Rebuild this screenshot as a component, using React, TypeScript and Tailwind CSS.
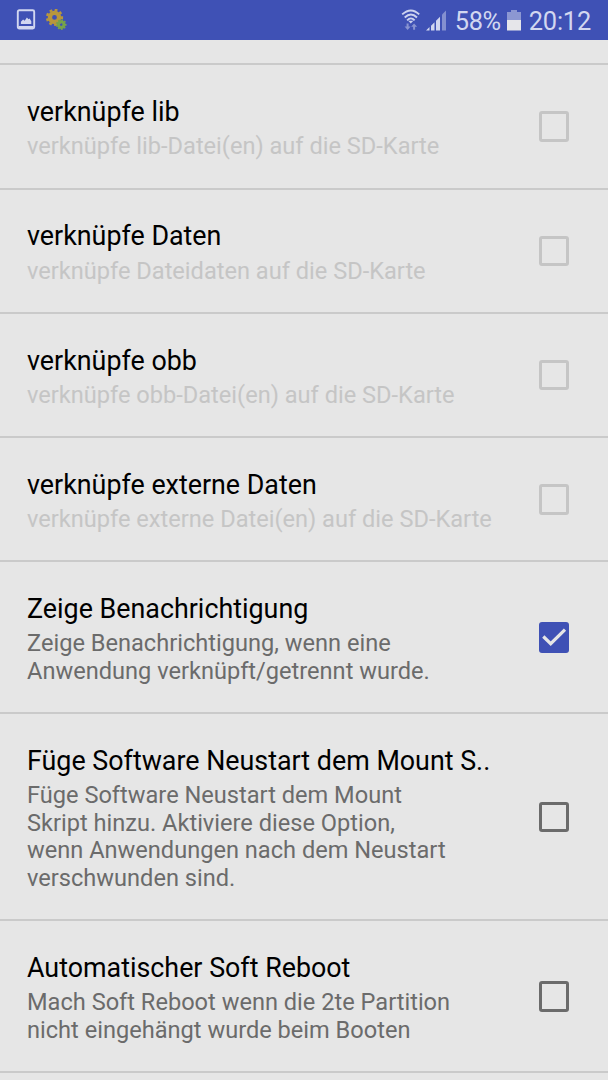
import { FC } from "react";

interface Option { title: string, summary: string, checked?: boolean, disabled?: boolean }

const options: Option[] = [
  { title: "verknüpfe lib", summary: "verknüpfe lib-Datei(en) auf die SD-Karte", disabled: true },
  { title: "verknüpfe Daten", summary: "verknüpfe Dateidaten auf die SD-Karte", disabled: true },
  { title: "verknüpfe obb", summary: "verknüpfe obb-Datei(en) auf die SD-Karte", disabled: true },
  { title: "verknüpfe externe Daten", summary: "verknüpfe externe Datei(en) auf die SD-Karte", disabled: true },
  {
    title: "Zeige Benachrichtigung",
    summary: "Zeige Benachrichtigung, wenn eine\nAnwendung verknüpft/getrennt wurde.",
    checked: true
  },
  {
    title: "Füge Software Neustart dem Mount S..",
    summary: "Füge Software Neustart dem Mount\nSkript hinzu. Aktiviere diese Option,\nwenn Anwendungen nach dem Neustart\nverschwunden sind."
  },
  {
    title: "Automatischer Soft Reboot",
    summary: "Mach Soft Reboot wenn die 2te Partition\nnicht eingehängt wurde beim Booten"
  },
];

const PictureIcon: FC = () => (
  <svg width="20" height="22" viewBox="0 0 20 22" fill="none">
    <rect x="1.8" y="1.3" width="16.4" height="18.2" rx="1.5" stroke="#d2d7f0" strokeWidth="1.9" />
    <path d="M2.5 17h15v2.3h-15z" fill="#d2d7f0" />
    <path d="M4.9 15v-2.2l2.2-2.3 1.6 1.2 2.2-3.2 1.6 1.8 1.1-.8 1.7 2.8V15z" fill="#d2d7f0" />
  </svg>
);

// ring with nine teeth around the hub
const Gear: FC<{ cx: number, cy: number, r: number, hole: number, color: string }> = ({ cx, cy, r, hole, color }) => (
  <g stroke={color} fill="none">
    <circle cx={cx} cy={cy} r={(r + hole) / 2} strokeWidth={r - hole} />
    {[0, 40, 80, 120, 160, 200, 240, 280, 320].map(a => (
      <path key={a} d={`M${cx} ${cy - r + 0.5}v${-r * 0.36}`} strokeWidth={r * 0.42} transform={`rotate(${a + 12} ${cx} ${cy})`} />
    ))}
  </g>
);

const GearsIcon: FC = () => (
  <svg width="22" height="22" viewBox="0 0 22 22">
    <Gear cx={8.5} cy={8.4} r={6.7} hole={2.4} color="#b8973c" />
    <Gear cx={15.2} cy={15.6} r={4.3} hole={1.3} color="#76a34a" />
  </svg>
);

const WifiIcon: FC = () => (
  <svg width="20" height="22" viewBox="0 0 20 22" fill="none" stroke="#cdd3ef" strokeWidth="1.9">
    <path d="M1.2 5.4Q10-2.6 18.2 5.4" />
    <path d="M3.7 8.5Q10 2.5 16 8.5" />
    <path d="M6.1 11.3Q10 7.4 13.6 11.3" />
    <path d="M7.3 11.8h5L9.8 14.6z" fill="#cdd3ef" stroke="none" />
    <path d="M5.6 14.6h2v3h2l-3 3.4-3-3.4h2zM12.1 20.7h2v-3h2l-3-3.3-3 3.3h2z" fill="#8994d1" stroke="none" />
  </svg>
);

const SignalIcon: FC = () => (
  <svg width="21" height="21" viewBox="0 0 21 21">
    <path d="M0 20.5l3.5-3.5v3.5zM5 15.7l3.5-3.5v8.3H5zM10 10.7L14 6.7V20.5h-4z" fill="#d2d7f0" />
    <path d="M16 4.6L20 .6V20.5h-4z" fill="#8490d0" />
  </svg>
);

const BatteryIcon: FC = () => (
  <svg width="14" height="21" viewBox="0 0 14 21">
    <path d="M4 0h6v2h4v8H0V2h4z" fill="#8c97d2" />
    <path d="M0 10h14V20.5H0z" fill="#e6e6ea" />
  </svg>
);

const StatusBar: FC = () => (
  <header className="h-[40.4px] shrink-0 bg-[#3f51b5] flex items-center justify-between pl-4 pr-[17px] text-[#d2d7f0]">
    <div className="flex items-center gap-[10px]">
      <PictureIcon />
      <GearsIcon />
    </div>
    <div className="flex items-center">
      <WifiIcon />
      <span className="ml-[5px]"><SignalIcon /></span>
      <span className="ml-2 mt-[3px] text-[25.4px] tracking-[-0.4px] leading-none">58%</span>
      <span className="ml-[6px]"><BatteryIcon /></span>
      <span className="ml-2 mt-[3px] text-[25.4px] tracking-[-0.2px] leading-none">20:12</span>
    </div>
  </header>
);

const Checkbox: FC<{ checked?: boolean, disabled?: boolean }> = ({ checked, disabled }) => {
  if (checked) {
    return (
      <span role="checkbox" aria-checked="true" className="w-[30px] h-[30.5px] shrink-0 rounded-[3px] bg-[#3f51b5]">
        <svg width="30" height="30" viewBox="0 0 30 30" fill="none">
          <path d="M4.3 14.5l7.4 7.2L26 7.7" stroke="#e6e6e6" strokeWidth="3.2" />
        </svg>
      </span>
    );
  }
  return (
    <span role="checkbox" aria-checked="false"
      className={`w-[30px] h-[30.5px] shrink-0 rounded-[3px] border-3 ${disabled ? "border-[#c5c5c5]" : "border-[#6b6b6b]"}`} />
  );
};

const OptionRow: FC<{ option: Option }> = ({ option }) => {
  const { title, summary, checked, disabled } = option;
  return (
    <li className="flex items-center justify-between border-b-2 border-[#cacaca] pl-[27px] pr-[39px]">
      <div className="whitespace-pre pt-[31.6px] pb-[26.8px]">
        <div className="text-[26.85px] leading-[31.6px] text-black">{title}</div>
        <div className={`mt-[4.7px] text-[23.6px] leading-[27.6px] ${disabled ? "text-[#c5c5c5]" : "text-[#6b6b6b]"}`}>{summary}</div>
      </div>
      <Checkbox checked={checked} disabled={disabled} />
    </li>
  );
};

export default function App() {
  return (
    <div className="w-[608px] h-[1080px] overflow-hidden flex flex-col bg-[#e6e6e6] font-[Roboto,sans-serif]">
      <StatusBar />
      <div className="h-[25px] shrink-0 border-b-2 border-[#cacaca]" />
      <ul>
        {options.map(option => <OptionRow key={option.title} option={option} />)}
      </ul>
    </div>
  );
}
